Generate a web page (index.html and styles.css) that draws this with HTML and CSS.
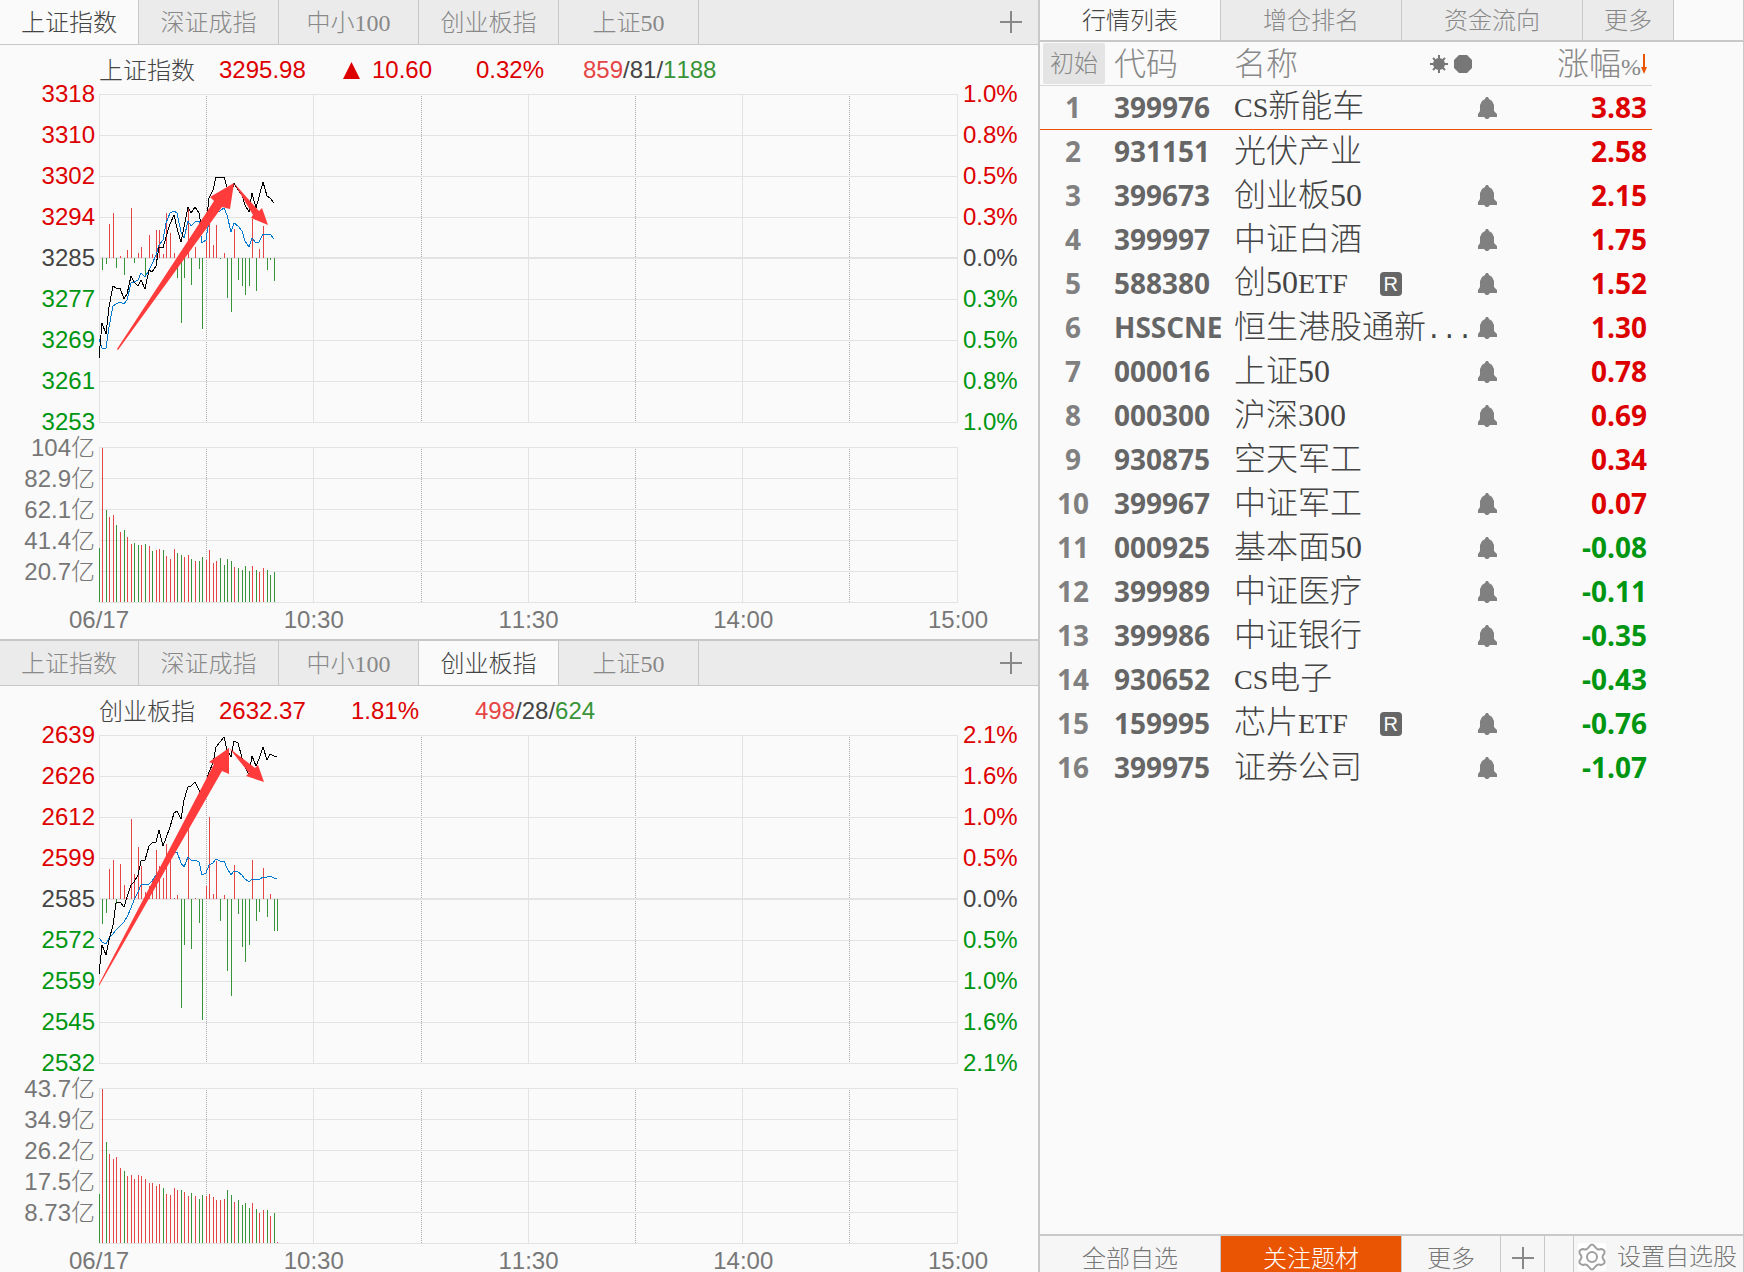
FILE: index.html
```html
<!DOCTYPE html>
<html lang="zh-CN">
<head>
    <meta charset="UTF-8">
    <meta name="viewport" content="width=device-width, initial-scale=1.0">
    <title>自选股行情</title>
    <link rel="stylesheet" href="styles.css">
</head>
<body>

<svg class="defs" width="0" height="0">
    <symbol id="bell" viewBox="0 0 20 24">
        <path d="M9 1h2l1 2 3 2 2 4v6l3 3v3h-7l-2 2H9l-2-2H1v-3l2-3V9l2-4 3-2z"/>
    </symbol>
    <symbol id="plus" viewBox="0 0 22 22">
        <path d="M10 0h2v10h10v2H12v10h-2V12H0v-2h10z"/>
    </symbol>
</svg>

<div class="app">
    <main class="charts">
        <!-- 上证指数 -->
        <section class="panel">
            <nav class="tabs">
                <button class="active">上证指数</button>
                <button>深证成指</button>
                <button>中小100</button>
                <button>创业板指</button>
                <button>上证50</button>
                <button class="add" aria-label="添加"><svg><use href="#plus"/></svg></button>
            </nav>
            <div class="quote">
                <span class="name">上证指数</span>
                <span class="price up">3295.98</span>
                <span class="change up"><svg class="arrow" viewBox="0 0 17 17"><path d="M8.500 0L17 17H0z"/></svg>10.60</span>
                <span class="percent up">0.32%</span>
                <span class="count"><i class="rise">859</i>/81/<i class="fall">1188</i></span>
            </div>
            <div class="chart" id="chartSh"></div>
        </section>

        <!-- 创业板指 -->
        <section class="panel">
            <nav class="tabs">
                <button>上证指数</button>
                <button>深证成指</button>
                <button>中小100</button>
                <button class="active">创业板指</button>
                <button>上证50</button>
                <button class="add" aria-label="添加"><svg><use href="#plus"/></svg></button>
            </nav>
            <div class="quote short">
                <span class="name">创业板指</span>
                <span class="price up">2632.37</span>
                <span class="percent up">1.81%</span>
                <span class="count"><i class="rise">498</i>/28/<i class="fall">624</i></span>
            </div>
            <div class="chart" id="chartCy"></div>
        </section>
    </main>

    <aside class="market">
        <nav class="market-tabs">
            <button class="active">行情列表</button>
            <button>增仓排名</button>
            <button>资金流向</button>
            <button class="more">更多</button>
        </nav>

        <div class="list">
            <table>
                <colgroup>
                    <col class="c-idx"><col class="c-code"><col class="c-name"><col class="c-bell"><col>
                </colgroup>
                <thead>
                    <tr>
                        <th class="idx"><button class="reset">初始</button></th>
                        <th>代码</th>
                        <th>
                            <div class="name-head">名称
                                <svg width="42" height="20" viewBox="0 0 42 20">
                                    <circle cx="9" cy="10" r="6"/>
                                    <path d="M9 1v18M0 10h18M3 4l12 12M15 4L3 16" stroke="#777" stroke-width="2"/>
                                    <path d="M29 1h8l5 5v8l-5 5h-8l-5-5V6z"/>
                                </svg>
                            </div>
                        </th>
                        <th></th>
                        <th class="chg">涨幅<small>%</small><svg width="6" height="22" viewBox="0 0 6 22"><path fill="#ea5504" d="M2 1h2v13h2l-3 7-3-7h2z"/></svg></th>
                    </tr>
                </thead>
                <tbody id="stockList"></tbody>
            </table>
        </div>

        <footer class="groups">
            <button>全部自选</button>
            <button class="active">关注题材</button>
            <button class="more">更多</button>
            <button class="new" aria-label="新建分组"><svg><use href="#plus"/></svg></button>
            <a class="settings" href="#">
                <svg width="28" height="28" viewBox="0 0 28 28" fill="none" stroke="#a0a0a0" stroke-width="2">
                    <path d="M11 4q3-5 6 0l2 2q2 1 4 0 5 1 3 5-3 3 0 6 2 4-3 5-2-1-4 0l-2 2q-3 5-6 0l-2-2q-2-1-4 0-5-1-3-5 3-3 0-6-2-4 3-5 2 1 4 0z"/>
                    <circle cx="14" cy="14" r="5"/>
                </svg>设置自选股
            </a>
        </footer>
    </aside>
</div>

<script>
    // 行情列表: 代码, 名称, 涨幅, 提醒, 标记
    const stocks = [
        ['399976', '<span class="latin">CS</span>新能车', 3.83, 1],
        ['931151', '光伏产业', 2.58, 0],
        ['399673', '创业板50', 2.15, 1],
        ['399997', '中证白酒', 1.75, 1],
        ['588380', '创50<span class="latin">ETF</span>', 1.52, 1, 'R'],
        ['HSSCNE', '恒生港股通新<span class="dots">...</span>', 1.30, 1],
        ['000016', '上证50', 0.78, 1],
        ['000300', '沪深300', 0.69, 1],
        ['930875', '空天军工', 0.34, 0],
        ['399967', '中证军工', 0.07, 1],
        ['000925', '基本面50', -0.08, 1],
        ['399989', '中证医疗', -0.11, 1],
        ['399986', '中证银行', -0.35, 1],
        ['930652', '<span class="latin">CS</span>电子', -0.43, 0],
        ['159995', '芯片<span class="latin">ETF</span>', -0.76, 1, 'R'],
        ['399975', '证券公司', -1.07, 1]
    ];

    document.getElementById('stockList').innerHTML = stocks.map(([code, name, chg, bell, mark], i) => `
        <tr class="${i === 0 ? 'selected' : ''}">
            <td class="idx">${i + 1}</td>
            <td class="code">${code}</td>
            <td class="stock">${name}${mark ? `<span class="mark">${mark}</span>` : ''}</td>
            <td class="bell">${bell ? '<svg><use href="#bell"/></svg>' : ''}</td>
            <td class="chg ${chg > 0 ? 'up' : 'down'}">${chg.toFixed(2)}</td>
        </tr>`).join('');

    const W = 859, H = 329, VH = 156;
    const times = ['06/17', '10:30', '11:30', '14:00', '15:00'];

    // 第 k 分钟的横坐标
    function minuteX(k) {
        return Math.floor(k * 3.575);
    }

    function rect(x, y, w, h, cls) {
        return `<rect x="${x}" y="${y}" width="${w}" height="${h}" class="${cls}"/>`;
    }

    // 网格
    function grid(h, step) {
        let s = '';
        for (let i = 0; i <= 8; i++) {
            const x = Math.round(i * 107.2);
            s += i % 2 ? `<path class="dash" d="M${x + 0.5} 2V${h}"/>` : rect(x, 0, 1, h, 'line');
        }
        for (let y = 0; y < h; y += step) s += rect(0, y, W, 1, 'line');
        return s;
    }

    // 柱线, 正数为红, 负数为绿
    function bars(data, base, upDown) {
        return data.map((v, k) => {
            const y = v < 0 && upDown ? base : base - Math.abs(v);
            return v ? rect(minuteX(k), y, 1, Math.abs(v), v > 0 ? 'rise' : 'fall') : '';
        }).join('');
    }

    function line(data, cls) {
        return `<polyline class="${cls}" points="${data.map((y, k) => minuteX(k) + ',' + y).join(' ')}"/>`;
    }

    function labels(list, cls) {
        return `<div class="${cls}">` + list.map((t, i) => {
            const c = cls === 'vol-axis' ? '' : i < 4 ? 'up' : i > 4 ? 'down' : '';
            return `<span class="${c}">${t}</span>`;
        }).join('') + '</div>';
    }

    function drawChart(id, d) {
        document.getElementById(id).innerHTML =
            labels(d.prices, 'price-axis') +
            `<svg class="plot" viewBox="0 0 ${W} ${H}" preserveAspectRatio="none">
                ${grid(H, 41)}${rect(0, 163, W, 2, 'line')}
                ${bars(d.force, 164, true)}
                ${line(d.avg, 'avg')}${line(d.now, 'now')}
                ${d.arrows.map(p => `<polygon class="trend" points="${p}"/>`).join('')}
            </svg>` +
            labels(d.percents, 'percent-axis') +
            labels(d.volumes, 'vol-axis') +
            `<svg class="plot vol" viewBox="0 0 ${W} ${VH}" preserveAspectRatio="none">
                ${grid(VH, 31)}${bars(d.volume, 155, false)}
            </svg>
            <div class="time-axis">${times.map(t => `<span>${t}</span>`).join('')}</div>`;
    }

    drawChart('chartSh', {
        prices: [3318, 3310, 3302, 3294, 3285, 3277, 3269, 3261, 3253],
        percents: ['1.0%', '0.8%', '0.5%', '0.3%', '0.0%', '0.3%', '0.5%', '0.8%', '1.0%'],
        volumes: ['104亿', '82.9亿', '62.1亿', '41.4亿', '20.7亿'],
        now: [264,229,240,213,192,194,194,205,200,182,188,192,186,195,176,178,172,153,154,143,130,121,134,148,133,
            113,119,113,119,138,133,104,96,83,83,83,93,100,89,96,101,111,118,99,114,103,88,102,104,109],
        avg: [245,254,254,233,212,210,208,210,206,189,188,186,179,183,176,170,161,151,146,129,119,117,119,138,144,
            127,132,128,127,149,146,126,121,118,117,114,121,138,129,132,137,147,153,144,149,148,140,140,140,145],
        force: [0,-12,-6,34,45,-10,2,-17,8,50,-5,5,11,-19,23,4,28,28,4,45,25,5,-20,-65,-20,
            50,-27,11,-11,-71,17,39,13,33,-1,5,-40,-54,29,-22,-28,-37,-28,39,-33,9,32,-12,-2,-23],
        volume: [-54,154,-92,85,87,-77,70,-72,65,58,-59,-57,57,-58,56,-51,52,53,-52,46,43,53,-49,-47,45,
            47,-43,41,-41,-45,42,52,39,41,-44,-37,-43,-41,35,-34,-32,-36,-31,36,-32,30,34,-32,-27,-30],
        arrows: ['18,255 115,107 111,103 135,89 131,115 123,113 19,256', '135,89 160,117 163,114 169,131 152,124 154,121']
    });

    drawChart('chartCy', {
        prices: [2639, 2626, 2612, 2599, 2585, 2572, 2559, 2545, 2532],
        percents: ['2.1%', '1.6%', '1.0%', '0.5%', '0.0%', '0.5%', '1.0%', '1.6%', '2.1%'],
        volumes: ['43.7亿', '34.9亿', '26.2亿', '17.5亿', '8.73亿'],
        now: [239,210,220,205,190,168,167,172,162,150,147,140,126,125,111,108,107,95,111,103,92,78,76,84,65,
            52,51,47,55,63,47,37,28,12,7,2,15,22,6,8,23,32,40,21,31,24,12,25,19,21,22],
        avg: [203,207,209,203,199,195,191,187,182,173,165,157,150,149,149,146,140,137,132,127,122,118,117,128,132,
            122,125,125,127,140,138,130,128,124,126,126,133,140,136,137,140,144,147,144,144,145,142,142,141,143,144],
        force: [0,-25,-14,30,39,-5,35,14,1,80,25,52,33,7,13,18,49,33,21,55,46,1,4,-109,-46,
            73,-50,1,-24,-121,13,82,5,38,-22,4,-72,-97,34,-15,-48,-63,-46,39,-22,-13,31,-18,5,-32,-32],
        volume: [-49,154,-101,89,84,86,75,-72,67,68,64,68,67,64,60,60,57,59,-55,49,48,55,53,-53,51,
            47,-50,47,-44,-48,47,49,46,43,43,44,-53,-48,41,-43,-38,-40,-35,40,-34,30,33,-33,27,-30,1],
        arrows: ['0,249 115,29 110,27 130,13 130,39 123,36 0,251', '130,13 156,33 159,30 165,47 147,41 150,38']
    });
</script>

</body>
</html>
```
FILE: styles.css
```css
* {
    box-sizing: border-box;
}
body {
    margin: 0;
    background: #fafafa;
    color: #444;
    font-family: "Liberation Serif", "Noto Sans CJK SC", serif;
    font-size: 24px;
    font-weight: 300;
    font-kerning: none;
}
button {
    margin: 0;
    padding: 0 0 3px;
    border: 0;
    background: none;
    color: #888;
    font: inherit;
    cursor: pointer;
}
.defs { position: absolute; }
.up { color: #d00; }
.down { color: #009611; }

.app {
    display: flex;
    height: 100vh;
    overflow: hidden;
}

/* 左侧分时图 */
.charts {
    flex: 1;
    min-width: 0;
}
.panel {
    border-bottom: 2px solid #c8c8c8;
}
.tabs {
    display: flex;
    height: 45px;
    background: #ebebeb;
    border-bottom: 1px solid #c8c8c8;
}
.tabs button {
    width: 140px;
    border-right: 1px solid #c8c8c8;
}
.tabs button:first-child { width: 139px; }
.tabs .active, .market-tabs .active {
    background: #fafafa;
    color: #444;
}
.tabs .add {
    width: 54px;
    margin-left: auto;
    padding: 0;
    border: 0;
}
.add svg, .new svg {
    display: block;
    width: 22px;
    height: 22px;
    margin: 0 auto;
    fill: #888;
}

.quote {
    display: flex;
    align-items: center;
    height: 49px;
    padding-left: 99px;
    font-family: "Liberation Sans", "Noto Sans CJK SC", sans-serif;
    font-weight: 400;
}
.quote .name {
    width: 120px;
    padding-bottom: 2px;
    font-weight: 300;
}
.price { width: 124px; }
.change { width: 133px; }
.percent { width: 107px; }
.short .price { width: 132px; }
.short .percent { width: 124px; }
.arrow {
    width: 17px;
    height: 17px;
    margin-right: 12px;
    fill: #d00;
    vertical-align: -1px;
}
.count i { font-style: normal; }
.count .rise { color: #e64545; }
.count .fall { color: #389438; }

.chart {
    display: grid;
    grid-template-columns: 99px 1fr 80px;
    font-family: "Liberation Sans", "Noto Sans CJK SC", sans-serif;
    font-weight: 400;
}
.plot {
    display: block;
    width: 100%;
    height: 329px;
    shape-rendering: crispEdges;
}
.plot.vol { height: 156px; }
.price-axis, .percent-axis, .vol-axis {
    display: flex;
    flex-direction: column;
}
.price-axis, .percent-axis {
    margin: -21px 0 5px;
    line-height: 41px;
}
.price-axis, .vol-axis {
    padding-right: 4px;
    text-align: right;
}
.percent-axis { padding-left: 5px; }
.vol-axis {
    margin-top: -15px;
    color: #777;
    font-weight: 300;
    line-height: 31px;
}
.time-axis {
    display: flex;
    justify-content: space-between;
    grid-column: 2;
    height: 36px;
    margin: 0 -40px;
    color: #777;
    line-height: 34px;
}
.time-axis span {
    width: 80px;
    text-align: center;
}

.plot .line { fill: #e3e3e3; }
.plot .dash {
    stroke: #aaa;
    stroke-dasharray: 1 1;
}
.plot .rise { fill: #e64545; }
.plot .fall { fill: #389438; }
.plot polyline { fill: none; }
.plot .now { stroke: #000; }
.plot .avg { stroke: #0078d0; }
.plot .trend {
    fill: #ff3b3b;
    shape-rendering: auto;
}

/* 右侧行情列表 */
.market {
    display: flex;
    flex-direction: column;
    width: 706px;
    border-left: 2px solid #c8c8c8;
    border-right: 1px solid #c8c8c8;
}
.market-tabs {
    display: flex;
    height: 42px;
    border-bottom: 2px solid #c8c8c8;
}
.market-tabs button {
    width: 181px;
    background: #ebebeb;
    border-right: 1px solid #c8c8c8;
}
.market-tabs .more { width: 91px; }

.list {
    flex: 1;
    min-height: 0;
    overflow: hidden;
}
table {
    width: 612px;
    table-layout: fixed;
    border-spacing: 0;
}
.c-idx { width: 66px; }
.c-code { width: 120px; }
.c-name { width: 246px; }
.c-bell { width: 30px; }
th, td {
    height: 44px;
    padding: 0 0 0 8px;
    text-align: left;
    white-space: nowrap;
    line-height: 36px;
}
td { padding-bottom: 2px; }
th {
    border-bottom: 1px solid #d8d8d8;
    color: #888;
    font-size: 32px;
    font-weight: 300;
}
.idx {
    padding-left: 0;
    text-align: center;
}
.reset {
    display: block;
    width: 62px;
    height: 41px;
    margin-left: 3px;
    padding: 0;
    background: #e4e4e4;
    border-radius: 2px;
    font-size: 24px;
}
.name-head {
    display: flex;
    align-items: center;
    justify-content: space-between;
    fill: #777;
}
th small {
    font-size: 24px;
    line-height: 1;
}
.selected td { border-bottom: 1px solid #ea5504; }
td.idx, .code, td.chg {
    font-family: "Open Sans", sans-serif;
    font-size: 28px;
    font-weight: 700;
}
td.idx { color: #808080; }
.code { color: #666; }
.stock { font-size: 32px; }
.latin { font-size: 28px; }
.dots {
    font-family: "Liberation Mono", monospace;
    font-size: 26px;
    line-height: 1;
}
.chg {
    padding-right: 5px;
    text-align: right;
}
.mark {
    display: inline-block;
    width: 22px;
    height: 24px;
    margin-left: 32px;
    border-radius: 4px;
    background: #666;
    color: #fff;
    font: 20px/24px "Liberation Sans", sans-serif;
    text-align: center;
    vertical-align: 2px;
}
.bell { padding: 0; }
.bell svg {
    display: block;
    width: 20px;
    height: 24px;
    margin: 0 auto;
    fill: #808080;
}

.groups {
    display: flex;
    height: 38px;
    overflow: hidden;
    border-top: 2px solid #c8c8c8;
    background: #f6f6f6;
}
.groups button {
    width: 181px;
    height: 44px;
    border-right: 1px solid #c8c8c8;
    color: #777;
}
.groups .active {
    background: #ea5504;
    color: #fff;
}
.groups .more { width: 99px; }
.groups .new {
    width: 44px;
    padding: 0;
}
.settings {
    display: flex;
    align-items: center;
    gap: 11px;
    height: 42px;
    margin-left: auto;
    padding: 0 6px 0 4px;
    border-left: 1px solid #c8c8c8;
    color: #777;
    line-height: 36px;
    text-decoration: none;
}
.settings svg { background: #fff; }
```
